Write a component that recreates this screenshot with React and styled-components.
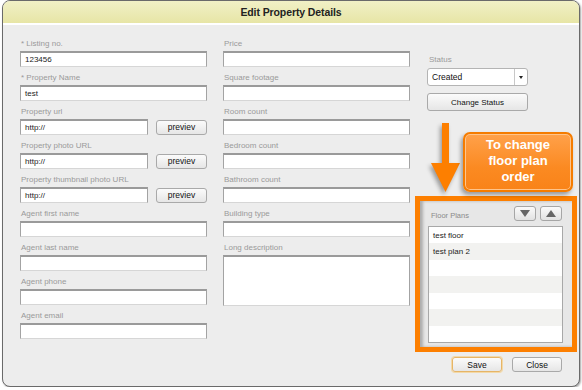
import React from 'react';
import styled, { createGlobalStyle } from 'styled-components';

const GlobalStyle = createGlobalStyle`
    html, body {
        margin: 0;
        padding: 0;
        background: #ffffff;
    }
    body {
        font-family: "Liberation Sans", Arial, sans-serif;
    }
`;

const Dialog = styled.div`
    position: relative;
    margin-left: 2px;
    width: 576px;
    height: 385px;
    border: 1px solid #6a6a6a;
    border-radius: 8px;
    background: #ededed;
    box-shadow: 1px 1px 2px rgba(0, 0, 0, 0.35);
    display: flex;
    flex-direction: column;
`;

const Header = styled.div`
    height: 22px;
    border-radius: 7px 7px 0 0;
    background: linear-gradient(#f1f0c6, #e7e5a6);
    border-bottom: 2px solid #ffffff;
    display: flex;
    align-items: center;
    justify-content: center;
    font-size: 10.5px;
    font-weight: bold;
    color: #222;
    letter-spacing: -0.1px;
`;

const Body = styled.div`
    flex: 1;
    display: flex;
    padding: 8px 0 0 17px;
`;

const Column = styled.div`
    width: 187px;
    display: flex;
    flex-direction: column;
    margin-right: ${p => p.$gap || 0}px;
`;

const Field = styled.div`
    padding-top: 4px;
    display: flex;
    flex-direction: column;
`;

const Label = styled.div`
    height: 14px;
    line-height: 14px;
    font-size: 8px;
    color: #9a9a9a;
    padding-left: 1px;
    white-space: nowrap;
`;

const InputRow = styled.div`
    display: flex;
    gap: 8px;
    align-items: center;
`;

const Input = styled.div`
    box-sizing: border-box;
    width: ${p => p.$width || 187}px;
    height: ${p => p.$height || 16}px;
    background: #ffffff;
    border: 1px solid #a3a3a3;
    border-top: 2px solid #9a9a9a;
    border-bottom-color: #d6d6d6;
    font-size: 8px;
    color: #222;
    padding: 2px 4px 0;
    line-height: 10px;
`;

const Button = styled.div`
    box-sizing: border-box;
    width: ${p => p.$width || 51}px;
    height: ${p => p.$height || 15}px;
    border: 1px solid ${p => (p.$primary ? '#e6b567' : '#a9a9a9')};
    border-radius: 3px;
    background: linear-gradient(#fbfbfb, #e6e6e6);
    box-shadow: ${p => (p.$primary ? '0 0 0 1px #f3d9a8' : 'none')};
    display: flex;
    align-items: center;
    justify-content: center;
    font-size: ${p => p.$size || 8}px;
    color: #111;
`;

const RightColumn = styled.div`
    position: relative;
    width: 162px;
    display: flex;
    flex-direction: column;
    z-index: 2;
`;

const StatusBlock = styled.div`
    padding: 21px 0 0 12px;
    display: flex;
    flex-direction: column;
    gap: 7px;
`;

const StatusLabel = styled.div`
    font-size: 8px;
    color: #9a9a9a;
    line-height: 12px;
    margin-bottom: -5px;
    padding-left: 2px;
`;

const Select = styled.div`
    box-sizing: border-box;
    width: 101px;
    height: 18px;
    background: #ffffff;
    border: 1px solid #b4b4b4;
    border-radius: 3px;
    display: flex;
    font-size: 8.5px;
    color: #111;
`;

const SelectValue = styled.div`
    flex: 1;
    display: flex;
    align-items: center;
    padding-left: 4px;
    border-right: 1px solid #c8c8c8;
`;

const SelectCaret = styled.div`
    width: 12px;
    display: flex;
    align-items: center;
    justify-content: center;
    &::after {
        content: '';
        border-left: 2.5px solid transparent;
        border-right: 2.5px solid transparent;
        border-top: 3px solid #222;
    }
`;

const Highlight = styled.div`
    margin-top: 85px;
    height: 156px;
    box-sizing: border-box;
    border: 5px solid #fd7f00;
    display: flex;
`;

const Panel = styled.div`
    flex: 1;
    background: #e7e7e7;
    box-shadow: inset 3px 0 3px rgba(0, 0, 0, 0.25);
    padding: 5px 9px 4px 8px;
    display: flex;
    flex-direction: column;
`;

const PanelHead = styled.div`
    height: 20px;
    display: flex;
    align-items: flex-start;
    gap: 4px;
    padding-right: 1px;
`;

const PanelTitle = styled.div`
    flex: 1;
    font-size: 7.5px;
    color: #8a8a8a;
    padding: 5px 0 0 3px;
`;

const ArrowButton = styled.div`
    box-sizing: border-box;
    width: 22px;
    height: 15px;
    border: 1px solid #a6a6a6;
    border-radius: 3px;
    background: linear-gradient(#fafafa, #e2e2e2);
    display: flex;
    align-items: center;
    justify-content: center;
    &::after {
        content: '';
        border-left: 5px solid transparent;
        border-right: 5px solid transparent;
        ${p => (p.$up ? 'border-bottom' : 'border-top')}: 7px solid #666;
    }
`;

const List = styled.div`
    height: 117px;
    box-sizing: border-box;
    border: 1px solid #a8a8a8;
    background: #ffffff;
    display: grid;
    grid-template-rows: repeat(7, 1fr);
`;

const ListRow = styled.div`
    background: ${p => (p.$odd ? '#f2f2f0' : '#ffffff')};
    font-size: 8px;
    color: #222;
    display: flex;
    align-items: center;
    padding-left: 4px;
`;

const Footer = styled.div`
    display: flex;
    justify-content: flex-end;
    gap: 10px;
    padding: 5px 15px 0 0;
`;

const Callout = styled.div`
    position: absolute;
    left: 48px;
    top: 99px;
    width: 110px;
    height: 60px;
    box-sizing: border-box;
    border: 2px solid #f57c00;
    border-radius: 7px;
    background: linear-gradient(#ffa14a, #fb8a22 60%, #f98318);
    box-shadow: inset 0 0 0 1px #ffc48a, -2px 3px 4px rgba(0, 0, 0, 0.35);
    color: #ffffff;
    font-size: 13px;
    font-weight: bold;
    line-height: 16px;
    text-align: center;
    display: flex;
    align-items: center;
    justify-content: center;
    padding: 0 12px 2px;
`;

const Arrow = styled.svg`
    position: absolute;
    left: 12px;
    top: 90px;
    overflow: visible;
    filter: drop-shadow(-2px 3px 2px rgba(0, 0, 0, 0.35));
`;

const leftFields = [
    { label: '* Listing no.', value: '123456' },
    { label: '* Property Name', value: 'test' },
    { label: 'Property url', value: 'http://', preview: true },
    { label: 'Property photo URL', value: 'http://', preview: true },
    { label: 'Property thumbnail photo URL', value: 'http://', preview: true },
    { label: 'Agent first name' },
    { label: 'Agent last name' },
    { label: 'Agent phone' },
    { label: 'Agent email' },
];

const middleFields = ['Price', 'Square footage', 'Room count', 'Bedroom count', 'Bathroom count', 'Building type'];

const plans = ['test floor', 'test plan 2', '', '', '', '', ''];

export default function App() {
    return (
        <>
            <GlobalStyle />
            <Dialog>
                <Header>Edit Property Details</Header>
                <Body>
                    <Column $gap={16}>
                        {leftFields.map(f => (
                            <Field key={f.label}>
                                <Label>{f.label}</Label>
                                {f.preview ? (
                                    <InputRow>
                                        <Input $width={128}>{f.value}</Input>
                                        <Button $size={8.5}>previev</Button>
                                    </InputRow>
                                ) : (
                                    <Input>{f.value}</Input>
                                )}
                            </Field>
                        ))}
                    </Column>
                    <Column $gap={5}>
                        {middleFields.map(label => (
                            <Field key={label}>
                                <Label>{label}</Label>
                                <Input />
                            </Field>
                        ))}
                        <Field>
                            <Label>Long description</Label>
                            <Input $height={51} />
                        </Field>
                    </Column>
                    <RightColumn>
                        <StatusBlock>
                            <StatusLabel>Status</StatusLabel>
                            <Select>
                                <SelectValue>Created</SelectValue>
                                <SelectCaret />
                            </Select>
                            <Button $width={101} $height={18}>Change Status</Button>
                        </StatusBlock>
                        <Highlight>
                            <Panel>
                                <PanelHead>
                                    <PanelTitle>Floor Plans</PanelTitle>
                                    <ArrowButton />
                                    <ArrowButton $up />
                                </PanelHead>
                                <List>
                                    {plans.map((p, i) => (
                                        <ListRow key={i} $odd={i % 2 === 1}>{p}</ListRow>
                                    ))}
                                </List>
                            </Panel>
                        </Highlight>
                        <Footer>
                            <Button $primary $width={50} $height={15} $size={8.5}>Save</Button>
                            <Button $width={50} $height={15} $size={8.5}>Close</Button>
                        </Footer>
                        <Arrow width="36" height="74" viewBox="0 0 36 74">
                            <polygon points="15,0 22,0 22,40 33,40 18.5,69 4,40 15,40" fill="#fd7f00" />
                        </Arrow>
                        <Callout>To change floor plan order</Callout>
                    </RightColumn>
                </Body>
            </Dialog>
        </>
    );
}
